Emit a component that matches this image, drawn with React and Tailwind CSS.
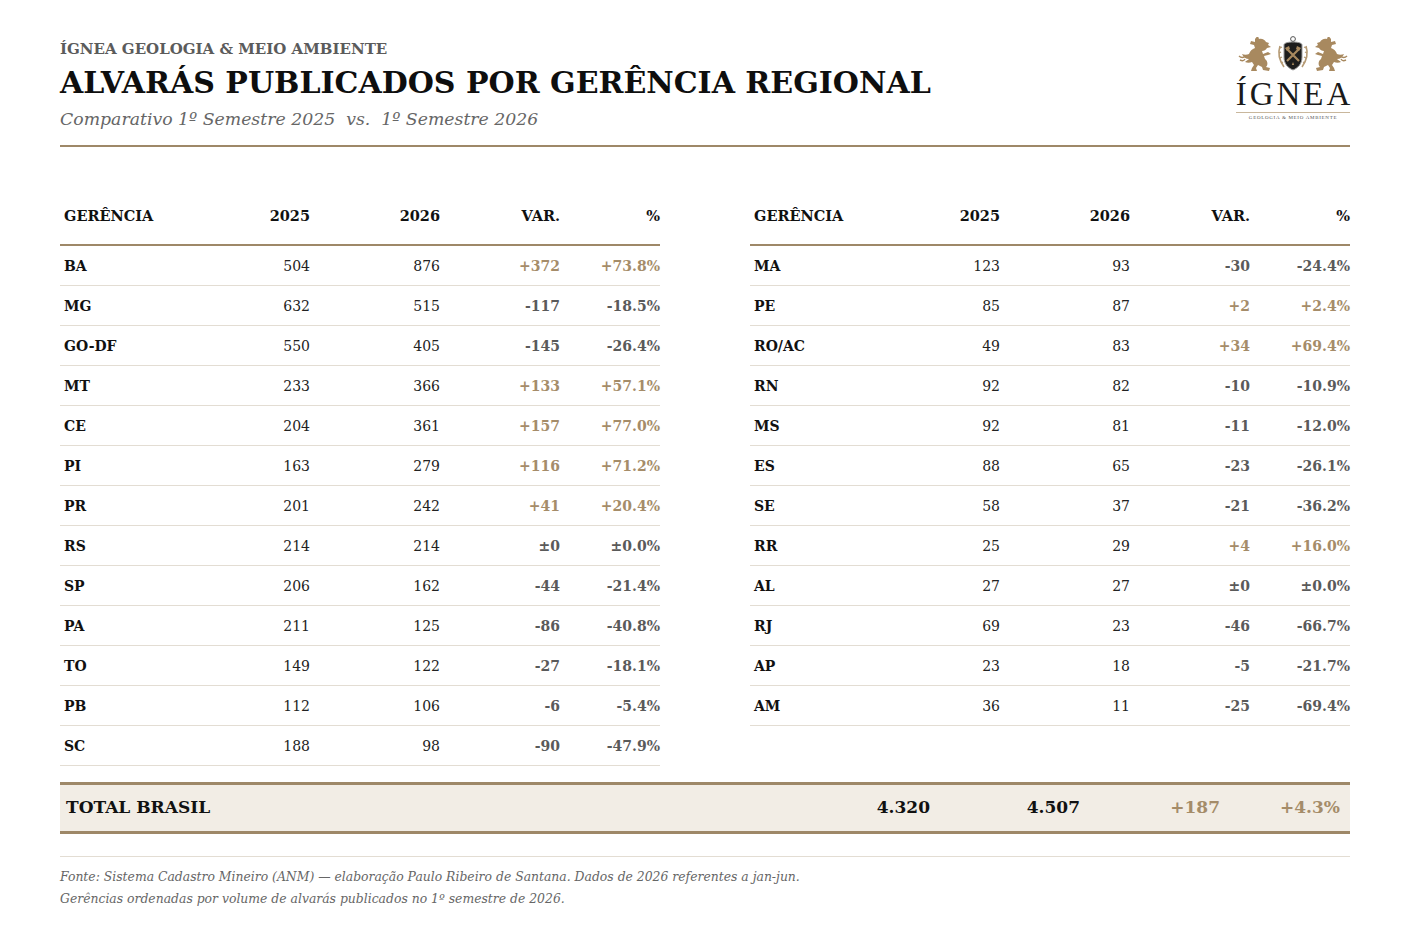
import React from "react";

const LEFT = [
  ["BA", 504, 876, "+372", "+73.8%", true],
  ["MG", 632, 515, "-117", "-18.5%", false],
  ["GO-DF", 550, 405, "-145", "-26.4%", false],
  ["MT", 233, 366, "+133", "+57.1%", true],
  ["CE", 204, 361, "+157", "+77.0%", true],
  ["PI", 163, 279, "+116", "+71.2%", true],
  ["PR", 201, 242, "+41", "+20.4%", true],
  ["RS", 214, 214, "±0", "±0.0%", false],
  ["SP", 206, 162, "-44", "-21.4%", false],
  ["PA", 211, 125, "-86", "-40.8%", false],
  ["TO", 149, 122, "-27", "-18.1%", false],
  ["PB", 112, 106, "-6", "-5.4%", false],
  ["SC", 188, 98, "-90", "-47.9%", false],
];

const RIGHT = [
  ["MA", 123, 93, "-30", "-24.4%", false],
  ["PE", 85, 87, "+2", "+2.4%", true],
  ["RO/AC", 49, 83, "+34", "+69.4%", true],
  ["RN", 92, 82, "-10", "-10.9%", false],
  ["MS", 92, 81, "-11", "-12.0%", false],
  ["ES", 88, 65, "-23", "-26.1%", false],
  ["SE", 58, 37, "-21", "-36.2%", false],
  ["RR", 25, 29, "+4", "+16.0%", true],
  ["AL", 27, 27, "±0", "±0.0%", false],
  ["RJ", 69, 23, "-46", "-66.7%", false],
  ["AP", 23, 18, "-5", "-21.7%", false],
  ["AM", 36, 11, "-25", "-69.4%", false],
];

const serif = "font-['DejaVu_Serif','Liberation_Serif',serif]";

// rampant lion, facing right
function Lion({ flip }) {
  return (
    <svg width="38" height="36" viewBox="0 0 38 36" className={flip ? "-scale-x-100" : ""}>
      <path
        fill="#a8895f"
        d="M22 2c3-1 6 1 7 3l3 1-1 2 3 2-4 1c-1 2-3 3-5 3l1 3 5-2 3 2-3 1-4 1 1 3c3 2 3 6 1 8l4 1-1 3-6-1-1-3-4-2-2 3 1 3h-6l1-3 2-3-2-3c-2 1-5 1-7 0 1-1 3-2 4-3-3 0-6-2-7-5 2 1 5 1 7 0 1-3 3-5 6-6l-1-3-4-1 1-3 4 1 0-3c1-1 2-3 3-3z"
      />
      <path d="M2 19c2 2 5 2 6 0M3 23c2 1 4 1 5-1" stroke="#a8895f" strokeWidth="1.4" fill="none" />
    </svg>
  );
}

function Shield() {
  return (
    <svg width="36" height="38" viewBox="0 0 36 38">
      <path d="M5 11c-2 6-1 14 4 21M31 11c2 6 1 14-4 21" stroke="#b59a74" strokeWidth="1.6" fill="none" />
      <path d="M7 12l-2 1M6 17l-2 1M7 22l-2 1M8 27l-2 1M29 12l2 1M30 17l2 1M29 22l2 1M28 27l2 1" stroke="#b59a74" strokeWidth="1.2" />
      <path d="M9 10c0-2 4-3 9-3s9 1 9 3v12c0 7-4 11-9 13-5-2-9-6-9-13z" fill="#1d1d1d" stroke="#999" strokeWidth="1" />
      <circle cx="18" cy="4" r="2.4" fill="#fff" stroke="#555" strokeWidth="1" />
      <path d="M12 14l12 12M24 14l-12 12" stroke="#a8895f" strokeWidth="2.2" />
      <path d="M10 13l4-2 1 3-3 2zM26 13l-4-2-1 3 3 2z" fill="#a8895f" />
      <path d="M18 27l-1.2 3h2.4z" fill="#a8895f" />
    </svg>
  );
}

function Logo() {
  return (
    <div className="flex flex-col items-center w-[114px]">
      <div className="flex items-end gap-0">
        <Lion />
        <Shield />
        <Lion flip />
      </div>
      <div className="font-['Liberation_Serif',serif] text-[33px] leading-[30px] tracking-[3px] pl-[3px] text-[#1a1a1a] mt-[6px]">ÍGNEA</div>
      <div className="w-full border-t border-[#c9b79c] mt-[3px]"></div>
      <div className="font-['Liberation_Serif',serif] text-[5px] leading-[7px] tracking-[0.7px] text-[#555] mt-[1px]">
        GEOLOGIA &amp; MEIO AMBIENTE
      </div>
    </div>
  );
}

function Table({ rows }) {
  const cols = "grid grid-cols-[130px_120px_130px_120px_100px]";
  return (
    <div className="w-[600px]">
      <div className={`${cols} h-[57px] pt-[18px] border-b-2 border-[#9e8868] text-[14.5px] leading-[18px] font-bold text-[#111]`}>
        <div className="pl-[4px]">GERÊNCIA</div>
        <div className="text-right">2025</div>
        <div className="text-right">2026</div>
        <div className="text-right">VAR.</div>
        <div className="text-right">%</div>
      </div>
      {rows.map(([name, a, b, v, p, up]) => (
        <div
          key={name}
          className={`${cols} h-[40px] items-center border-b border-[#e3ddd3] text-[14px] leading-[18px]`}
        >
          <div className="pl-[4px] font-bold text-[#111]">{name}</div>
          <div className="text-right text-[#222]">{a}</div>
          <div className="text-right text-[#222]">{b}</div>
          <div className={`text-right font-bold ${up ? "text-[#a58c69]" : "text-[#5a5a5a]"}`}>{v}</div>
          <div className={`text-right font-bold ${up ? "text-[#a58c69]" : "text-[#5a5a5a]"}`}>{p}</div>
        </div>
      ))}
    </div>
  );
}

export default function App() {
  return (
    <div className={`${serif} bg-white w-[1410px] h-[944px] px-[60px] pt-[40px]`}>
      {/* HEADER */}
      <div className="flex justify-between items-start">
        <div>
          <div className="text-[15px] leading-[18px] font-bold text-[#5b5b5b]">
            ÍGNEA GEOLOGIA &amp; MEIO AMBIENTE
          </div>
          <h1 className="text-[30px] leading-[40px] font-bold text-[#0e0e0e] mt-[5px]">
            ALVARÁS PUBLICADOS POR GERÊNCIA REGIONAL
          </h1>
          <p className="text-[17.3px] leading-[24px] italic text-[#666] mt-[4px]">
            Comparativo 1º Semestre 2025 &nbsp;vs. &nbsp;1º Semestre 2026
          </p>
        </div>
        <div className="-mt-[5px]">
          <Logo />
        </div>
      </div>
      <div className="border-t-2 border-[#9e8868] mt-[14px]"></div>

      {/* TABLES */}
      <div className="flex justify-between items-start mt-[42px]">
        <Table rows={LEFT} />
        <Table rows={RIGHT} />
      </div>

      {/* TOTAL */}
      <div className="grid grid-cols-[1fr_150px_150px_140px_120px] items-center h-[52px] mt-[16px] bg-[#f2ede5] border-y-[3px] border-[#9e8868] pr-[10px] text-[17px] font-bold">
        <div className="pl-[6px] text-[#111]">TOTAL BRASIL</div>
        <div className="text-right text-[#111]">4.320</div>
        <div className="text-right text-[#111]">4.507</div>
        <div className="text-right text-[#a58c69]">+187</div>
        <div className="text-right text-[#a58c69]">+4.3%</div>
      </div>

      {/* FOOTER */}
      <div className="border-t border-[#e3ddd3] mt-[22px] pt-[9px] text-[12.4px] leading-[22px] italic text-[#666]">
        <p>Fonte: Sistema Cadastro Mineiro (ANM) — elaboração Paulo Ribeiro de Santana. Dados de 2026 referentes a jan-jun.</p>
        <p>Gerências ordenadas por volume de alvarás publicados no 1º semestre de 2026.</p>
      </div>
    </div>
  );
}
